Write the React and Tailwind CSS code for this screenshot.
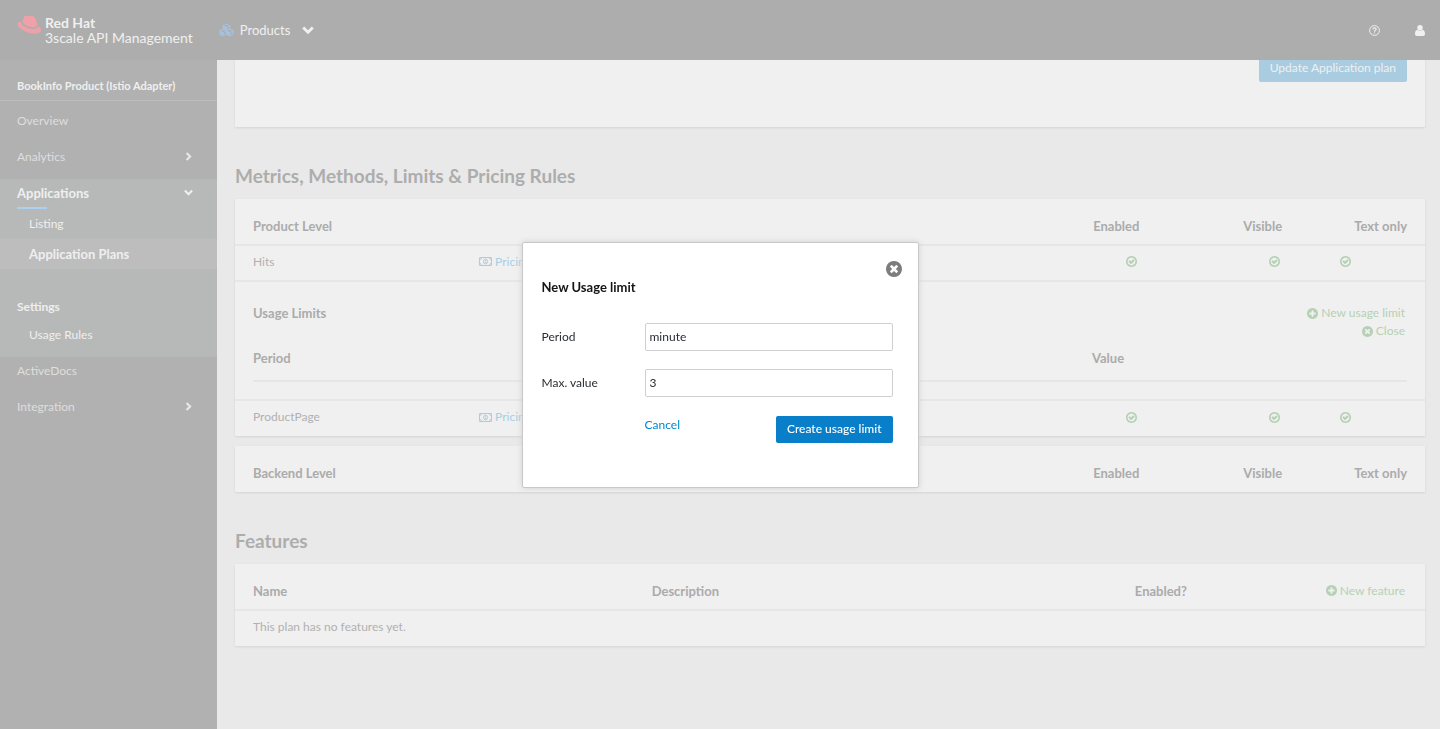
import { FaCubes } from "react-icons/fa";

const PATHS = {
  check:
    "M1299 813l-422 422q-19 19-45 19t-45-19l-294-294q-19-19-19-45t19-45l102-102q19-19 45-19t45 19l147 147 275-275q19-19 45-19t45 19l102 102q19 19 19 45t-19 45zm141 83q0-148-73-273t-198-198-273-73-273 73-198 198-73 273 73 273 198 198 273 73 273-73 198-198 73-273zm224 0q0 209-103 385.5t-279.5 279.5-385.5 103-385.5-103-279.5-279.5-103-385.5 103-385.5 279.5-279.5 385.5-103 385.5 103 279.5 279.5 103 385.5z",
  plus: "M1344 960v-128q0-26-19-45t-45-19h-256v-256q0-26-19-45t-45-19h-128q-26 0-45 19t-19 45v256h-256q-26 0-45 19t-19 45v128q0 26 19 45t45 19h256v256q0 26 19 45t45 19h128q26 0 45-19t19-45v-256h256q26 0 45-19t19-45zm320-64q0 209-103 385.5t-279.5 279.5-385.5 103-385.5-103-279.5-279.5-103-385.5 103-385.5 279.5-279.5 385.5-103 385.5 103 279.5 279.5 103 385.5z",
  times:
    "M1277 1122q0-26-19-45l-181-181 181-181q19-19 19-45 0-27-19-46l-90-90q-19-19-46-19-26 0-45 19l-181 181-181-181q-19-19-45-19-27 0-46 19l-90 90q-19 19-19 46 0 26 19 45l181 181-181 181q-19 19-19 45 0 27 19 46l90 90q19 19 46 19 26 0 45-19l181-181 181 181q19 19 45 19 27 0 46-19l90-90q19-19 19-46zm387-226q0 209-103 385.5t-279.5 279.5-385.5 103-385.5-103-279.5-279.5-103-385.5 103-385.5 279.5-279.5 385.5-103 385.5 103 279.5 279.5 103 385.5z",
};

function Glyph({ name, className }) {
  return (
    <svg viewBox="128 128 1536 1536" fill="currentColor" className={className} aria-hidden="true">
      <path d={PATHS[name]} />
    </svg>
  );
}

function Chevron({ className }) {
  return (
    <svg viewBox="0 0 12 12" fill="none" stroke="currentColor" strokeWidth="2.8" className={className} aria-hidden="true">
      <path d="M1.2 3.4 6 8.2l4.8-4.8" />
    </svg>
  );
}

function Money() {
  return (
    <svg viewBox="0 0 26 18" className="h-[9px] w-[13px]" fill="none" stroke="currentColor" strokeWidth="2" aria-hidden="true">
      <rect x="1" y="1" width="24" height="16" rx="0.6" />
      <path d="M5 1.5A3.6 3.6 0 0 1 1.5 5M21 1.5A3.6 3.6 0 0 0 24.500 5M5 16.500A3.6 3.6 0 0 0 1.500 13M21 16.500A3.6 3.6 0 0 1 24.500 13" />
      <ellipse cx="13" cy="9" rx="4" ry="5" />
      <path d="M11.600 7.200 13.200 6v5.600M11.400 11.600h3.600" strokeWidth="1.400" />
    </svg>
  );
}

function Hat() {
  return (
    <svg viewBox="0 0 72 56" className="h-[19px] w-6" aria-hidden="true">
      <path
        fill="#f0a0a8"
        d="M16 21 20.500 6C21.500 2.500 24 1 27.500 1.500c3 .5 5 2 8 1.500 3.500-.6 5-2.200 9-1.500 6 1 9.500 4 11.500 9.500L60 24c.8 2.500.8 4.500-.2 6.500 6 3.500 12.200 8.500 12 15C71.600 54 60 56.500 50 55.500 33 54 12 44.500 4 33 .2 27 1 20 9.500 20c2 0 4.500.4 6.500 1z"
      />
      <path
        fill="none"
        stroke="#adadad"
        strokeWidth="5"
        d="M15.500 20.500c-1 4 1 7 8 11 10 5.500 20 8 28 7.500 5-.4 8.500-2.500 9-7"
      />
    </svg>
  );
}

function NavItem({ children, arrow }) {
  return (
    <a href="#" className="flex h-9 items-start justify-between pt-[5px] pr-6 pl-[17px] text-[#dedede]">
      <span>{children}</span>
      {arrow && <Chevron className="mt-1 h-[9px] w-[9px] -rotate-90 text-[#e8e8e8]" />}
    </a>
  );
}

function LevelHead({ title }) {
  return (
    <thead>
      <tr className="h-[46px] text-[13px] text-[#ababab]">
        <th scope="col" className="pt-2 pl-[18px] text-left">{title}</th>
        <th />
        <th scope="col" className="pt-2 pr-[9px] text-right">Enabled</th>
        <th scope="col" className="pt-2 pr-[9px] text-right">Visible</th>
        <th scope="col" className="pt-2 pr-[18px] text-right">Text only</th>
      </tr>
    </thead>
  );
}

function LevelCols() {
  return (
    <colgroup>
      <col className="w-[19%]" />
      <col />
      <col className="w-[12%]" />
      <col className="w-[12%]" />
      <col className="w-[11.25%]" />
    </colgroup>
  );
}

function CheckButton() {
  return (
    <button type="button" aria-label="Toggle" className="ml-auto flex h-[18px] items-center text-[#b3d0b3]">
      <Glyph name="check" className="h-[11px] w-[11px]" />
    </button>
  );
}

function MetricRow({ name }) {
  return (
    <tr className="h-9 border-t-2 border-[#e6e6e6]">
      <td className="pb-[3px] pl-[18px]">{name}</td>
      <td className="pb-[3px] pl-[18px]">
        <a href="#" className="flex items-center gap-[3px] text-[#a6cfe4]">
          <Money />
          Pricing (0)
        </a>
      </td>
      <td className="pr-[11px] pb-[3px]"><CheckButton /></td>
      <td className="pr-[11px] pb-[3px]"><CheckButton /></td>
      <td className="pr-[74px] pb-[3px]"><CheckButton /></td>
    </tr>
  );
}

function GreenLink({ icon, children }) {
  return (
    <a href="#" className="flex items-center justify-end gap-[3px] text-[12px] font-normal text-[#b5d1b5]">
      <Glyph name={icon} className="h-[11px] w-[11px]" />
      {children}
    </a>
  );
}

const CARD = "bg-[#f0f0f0] shadow-[0_1px_2px_#d4d4d4]";
const FIELD = "h-7 w-full appearance-none rounded-xs border border-[#cfcfcf] bg-white px-1 text-[#292e34]";

export default function App() {
  return (
    <div className="flex h-screen flex-col bg-[#e9e9e9] font-['Lato',sans-serif] text-[12px] leading-[18px] text-[#b0b0b0]">
      <header className="z-10 flex h-[60px] shrink-0 items-center bg-[#adadad] pr-[15px] pl-[17px] text-[#f0f0f0]">
        <a href="#" className="flex items-start gap-1">
          <Hat />
          <span className="flex flex-col text-[14px] leading-[15px]">
            <strong>Red Hat</strong>
            <span>3scale API Management</span>
          </span>
        </a>
        <button type="button" className="ml-[26px] flex items-center text-[13px]">
          <FaCubes className="h-[14px] w-[15px] text-[#a3c3e3]" />
          <span className="ml-[6px]">Products</span>
          <Chevron className="ml-3 h-3 w-3" />
        </button>
        <div className="ml-auto flex items-center gap-[35px]">
          <button type="button" aria-label="Help">
            <svg viewBox="0 0 22 22" className="h-[11px] w-[11px]" fill="none" stroke="currentColor" strokeWidth="2" aria-hidden="true">
              <circle cx="11" cy="11" r="9.800" />
              <path d="M7.800 8.800C8 4.500 14.500 5 14.300 8.600 14.200 10.600 11 11 11 13.300M11 15v2.200" strokeWidth="2.400" />
            </svg>
          </button>
          <button type="button" aria-label="Account">
            <svg viewBox="0 0 20 22" className="h-[11px] w-[10px]" fill="currentColor" aria-hidden="true">
              <circle cx="10" cy="5.500" r="5.500" />
              <path d="M5 9.500c3 2.600 7 2.600 10 0 3.500.5 5 4 5 8 0 2.800-1.500 4.500-4 4.500H4c-2.500 0-4-1.700-4-4.500 0-4 1.500-7.500 5-8z" />
            </svg>
          </button>
        </div>
      </header>

      <div className="flex min-h-0 flex-1">
        <nav className="w-[217px] shrink-0 bg-[#b1b1b1] text-[#efefef]">
          <h2 className="mb-1.5 border-b border-[#bcbcbc] pt-[17px] pb-[5px] pl-[17px] text-[11px] font-bold">
            BookInfo Product (Istio Adapter)
          </h2>
          <NavItem>Overview</NavItem>
          <NavItem arrow>Analytics</NavItem>
          <div className="bg-[#b7b9b9] pb-[7px]">
            <a href="#" className="flex items-start justify-between pt-[5px] pr-6 pl-[17px] text-[13px] font-bold">
              <span>Applications</span>
              <Chevron className="mt-1 h-[9px] w-[9px]" />
            </a>
            <div className="mt-[5px] ml-[17px] h-0.5 w-[30px] bg-[#abd0f0]" />
            <a href="#" className="block py-1.5 pl-[29px]">Listing</a>
            <a href="#" className="block bg-[#bdbdbe] py-1.5 pl-[29px] text-[13px] font-bold">Application Plans</a>
            <h3 className="mt-[29px] pl-[17px] font-bold">Settings</h3>
            <a href="#" className="mt-1 block py-1.5 pl-[29px]">Usage Rules</a>
          </div>
          <NavItem>ActiveDocs</NavItem>
          <NavItem arrow>Integration</NavItem>
        </nav>

        <main className="min-w-0 flex-1 overflow-hidden pr-[15px] pl-[18px]">
          <section className={`-mt-2 flex justify-end pt-1 pr-[18px] pb-[45px] ${CARD}`}>
            <button type="button" className="h-[26px] rounded-xs bg-[#a9cce0] px-[11px] pb-0.5 text-[#f0f0f0]">
              Update Application plan
            </button>
          </section>

          <h2 className="mt-[37px] mb-[11px] text-[19px] leading-6 font-bold text-[#adadad]">
            Metrics, Methods, Limits &amp; Pricing Rules
          </h2>
          <table className={`w-full table-fixed border-collapse ${CARD}`}>
            <LevelCols />
            <LevelHead title="Product Level" />
            <tbody>
              <MetricRow name="Hits" />
              <tr className="border-t-2 border-[#e6e6e6]">
                <td colSpan={5} className="px-[18px] pt-[22px] pb-[17px]">
                  <div className="flex items-start justify-between">
                    <h3 className="text-[13px] font-bold text-[#ababab]">Usage Limits</h3>
                    <div className="pr-0.5">
                      <GreenLink icon="plus">New usage limit</GreenLink>
                      <GreenLink icon="times">Close</GreenLink>
                    </div>
                  </div>
                  <table className="mt-[9px] w-full table-fixed border-collapse">
                    <thead>
                      <tr className="h-8 border-b-2 border-[#e6e6e6] text-left align-top text-[13px] text-[#ababab]">
                        <th scope="col" className="w-[72.7%]">Period</th>
                        <th scope="col">Value</th>
                      </tr>
                    </thead>
                  </table>
                </td>
              </tr>
              <MetricRow name="ProductPage" />
            </tbody>
          </table>
          <table className={`mt-[10px] w-full table-fixed border-collapse ${CARD}`}>
            <LevelCols />
            <LevelHead title="Backend Level" />
          </table>

          <h2 className="mt-[37px] mb-[11px] text-[19px] leading-6 font-bold text-[#adadad]">Features</h2>
          <table className={`w-full table-fixed border-collapse ${CARD}`}>
            <thead>
              <tr className="h-[46px] text-left text-[13px] text-[#ababab]">
                <th scope="col" className="w-[33.5%] pt-2 pl-[18px]">Name</th>
                <th scope="col" className="w-[35.5%] pt-2 pl-[18px]">Description</th>
                <th scope="col" className="w-[11%] pt-2 pr-0 text-right">Enabled?</th>
                <th className="pt-2 pr-5"><GreenLink icon="plus">New feature</GreenLink></th>
              </tr>
            </thead>
            <tbody>
              <tr className="h-9 border-t-2 border-[#e6e6e6]">
                <td colSpan={4} className="pb-[3px] pl-[18px]">This plan has no features yet.</td>
              </tr>
            </tbody>
          </table>
        </main>
      </div>

      <div className="fixed inset-0 z-20 flex items-center justify-center">
        <form
          role="dialog"
          aria-labelledby="dialog-title"
          className="w-[397px] rounded-xs border border-[#c8c8c8] bg-white pt-[18px] pr-[25px] pb-11 pl-[19px] text-[#292e34] shadow-[0_0_6px_#d0d0d0]"
        >
          <div className="-mr-[9px] flex justify-end">
            <button type="button" aria-label="Close dialog" className="text-[#7d7d7d]">
              <Glyph name="times" className="h-4 w-4" />
            </button>
          </div>
          <h2 id="dialog-title" className="mt-px text-[13px] font-bold text-[#151515]">New Usage limit</h2>
          <div className="mt-[27px] grid grid-cols-[103px_1fr] items-center gap-y-[18px]">
            <label htmlFor="period">Period</label>
            <select id="period" className={FIELD} defaultValue="minute">
              <option>minute</option>
              <option>hour</option>
              <option>day</option>
            </select>
            <label htmlFor="max-value">Max. value</label>
            <input id="max-value" type="text" defaultValue="3" className={FIELD} />
          </div>
          <div className="mt-[19px] flex items-start justify-between pl-[103px]">
            <a href="#" className="text-[#0088ce]">Cancel</a>
            <button type="submit" className="h-[27px] rounded-xs bg-[#087fc8] px-[11px] font-medium text-white">
              Create usage limit
            </button>
          </div>
        </form>
      </div>
    </div>
  );
}
